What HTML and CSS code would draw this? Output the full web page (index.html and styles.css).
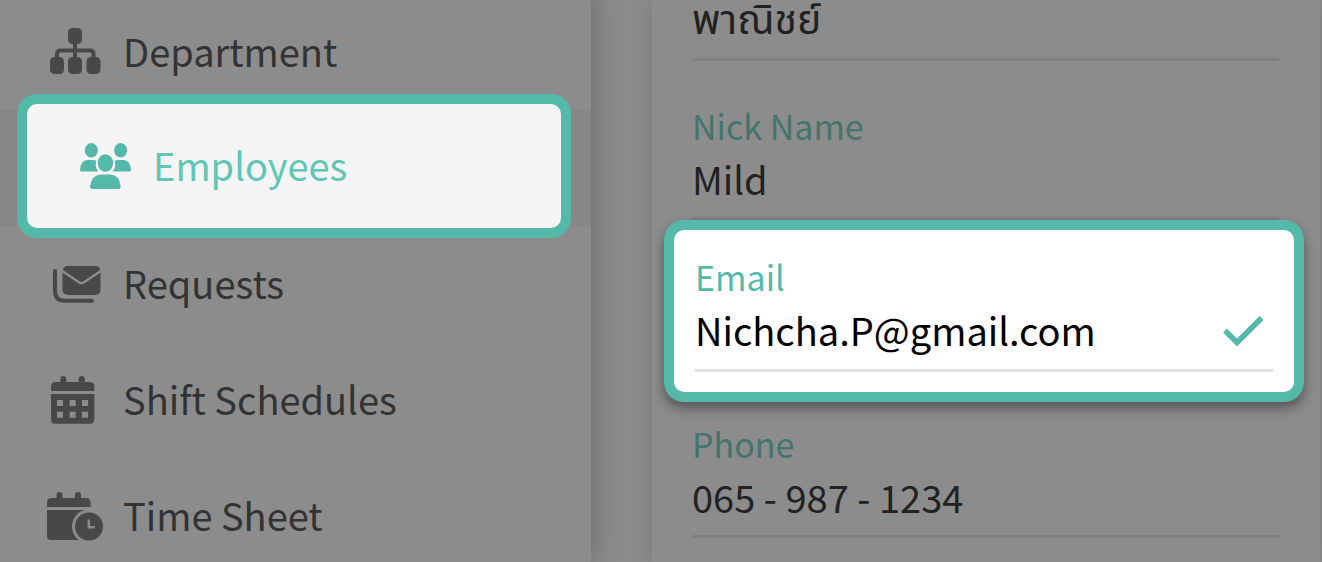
FILE: index.html
```
<!DOCTYPE html>
<html lang="en">
<head>
    <meta charset="utf-8">
    <title>Employees</title>
    <link rel="stylesheet" href="styles.css">
</head>
<body>
    <div class="app">
        <nav class="sidebar">
            <a class="menu-item" href="#department">
                <svg class="menu-icon" viewBox="0 0 56 52" aria-hidden="true">
                    <rect x="21" y="2" width="14" height="16" rx="4.5"/>
                    <rect x="3" y="31" width="14" height="17" rx="4.5"/>
                    <rect x="21" y="31" width="14" height="17" rx="4.5"/>
                    <rect x="39.5" y="31" width="14" height="17" rx="4.5"/>
                    <path class="stroke" d="M28 16V33M10 33V28Q10 24.5 13.5 24.5H43Q46.5 24.5 46.5 28V33"/>
                </svg>
                <span class="menu-label">Department</span>
            </a>
            <div class="active-row">
                <a class="menu-item callout menu-callout" href="#employees">
                    <svg class="menu-icon" viewBox="0 0 56 52" aria-hidden="true">
                        <ellipse cx="14.3" cy="10.3" rx="6.5" ry="7.2"/>
                        <ellipse cx="43.6" cy="10.3" rx="6.5" ry="7.2"/>
                        <path d="M10.5 20H16Q18.5 20 19.3 21Q17.5 27.5 21.5 31.6H4.5Q3 31.6 3 30Q3.5 20.5 10.5 20Z"/>
                        <path d="M46.5 20H41Q38.5 20 37.7 21Q39.5 27.5 35.5 31.6H52.5Q54 31.6 54 30Q53.5 20.5 46.5 20Z"/>
                        <ellipse cx="28.4" cy="23" rx="7.7" ry="8.7"/>
                        <path d="M23.5 34.5H33.5Q42.5 35 43.7 46.5Q43.7 49 41.5 49H15.5Q13 49 13 46.5Q14.5 35 23.5 34.5Z"/>
                    </svg>
                    <span class="menu-label">Employees</span>
                </a>
            </div>
            <a class="menu-item" href="#requests">
                <svg class="menu-icon" viewBox="0 0 56 52" aria-hidden="true">
                    <rect x="15.5" y="8" width="38" height="29" rx="5"/>
                    <path class="gap-line" d="M14.5 12.5L32 24.3Q34.5 26 37 24.3L54.5 12.5"/>
                    <path class="stroke" d="M8 13V33Q8 42.7 17.5 42.7H45"/>
                </svg>
                <span class="menu-label">Requests</span>
            </a>
            <a class="menu-item" href="#shift-schedules">
                <svg class="menu-icon" viewBox="0 0 56 52" aria-hidden="true">
                    <path d="M4 17V12.5Q4 8 8.5 8H13.3V5A3 3 0 0 1 19.3 5V8H31.7V5A3 3 0 0 1 37.7 5V8H42.8Q47.3 8 47.3 12.5V17Z"/>
                    <path fill-rule="evenodd" d="M4 20H47.3V45.5Q47.3 49.7 43 49.7H8.3Q4 49.7 4 45.5ZM10 26V32H16V26ZM22.7 26V32H28.7V26ZM35 26V32H41V26ZM10 37.7V43.7H16V37.7ZM22.7 37.7V43.7H28.7V37.7ZM35 37.7V43.7H41V37.7Z"/>
                </svg>
                <span class="menu-label">Shift Schedules</span>
            </a>
            <a class="menu-item" href="#time-sheet">
                <svg class="menu-icon" viewBox="0 0 56 52" aria-hidden="true">
                    <path d="M0 17V12.5Q0 8 4.5 8H9.5V5A3 3 0 0 1 15.5 5V8H28V5A3 3 0 0 1 34 5V8H39Q43.5 8 43.5 12.5V17Z"/>
                    <path d="M0 20H43.5V50H4.3Q0 50 0 45.7Z"/>
                    <circle class="gap-fill" cx="42" cy="36.5" r="17"/>
                    <circle cx="42" cy="36.5" r="14"/>
                    <path class="gap-line" d="M41.8 29.5V37.3H47.8"/>
                </svg>
                <span class="menu-label">Time Sheet</span>
            </a>
        </nav>

        <main class="content">
            <form class="profile-card">
                <div class="field">
                    <label for="lastName">Last Name</label>
                    <input id="lastName" type="text" lang="th" value="พาณิชย์">
                </div>
                <div class="field">
                    <label for="nickName">Nick Name</label>
                    <input id="nickName" type="text" value="Mild">
                </div>
                <div class="callout email-callout">
                    <div class="field">
                        <label for="email">Email</label>
                        <div class="field-row">
                            <input id="email" type="email" value="Nichcha.P@gmail.com">
                            <svg class="check" viewBox="0 0 40 34" aria-hidden="true">
                                <path d="M2 18.5L14 30.5L38.5 6"/>
                            </svg>
                        </div>
                    </div>
                </div>
                <div class="field">
                    <label for="phone">Phone</label>
                    <input id="phone" type="tel" value="065 - 987 - 1234">
                </div>
            </form>
        </main>
    </div>
</body>
</html>
```
FILE: styles.css
```
* {
    box-sizing: border-box;
}
body {
    font-family: "Noto Sans CJK SC", "Noto Sans Thai", "Noto Sans", sans-serif;
    font-size: 38px;
    line-height: 48px;
    background-color: #8b8b8b;
    margin: 0;
}
.app {
    display: flex;
    height: 100vh;
    overflow: hidden;
}

/* Sidebar */
.sidebar {
    flex: 0 0 591px;
    margin-top: -6px;
    background-color: #8c8c8c;
    box-shadow: 4px 0 24px rgba(0, 0, 0, 0.2);
}
.menu-item {
    display: flex;
    align-items: center;
    gap: 20px;
    height: 116px;
    padding-left: 47px;
    color: #333333;
    text-decoration: none;
}
.menu-icon {
    flex: none;
    width: 56px;
    height: 52px;
    fill: #484848;
}
.menu-icon .stroke {
    fill: none;
    stroke: #484848;
    stroke-width: 4;
    stroke-linecap: round;
}
.menu-icon .gap-line {
    fill: none;
    stroke: #8c8c8c;
    stroke-width: 2.5;
}
.menu-icon .gap-fill {
    fill: #8c8c8c;
}
.menu-label {
    padding-bottom: 2px;
}
.active-row {
    display: flow-root;
    height: 116px;
    background-color: #878787;
}

/* Highlighted boxes */
.callout {
    position: relative;
    border: 10px solid #55b9aa;
    border-radius: 20px;
}
.menu-callout {
    height: 144px;
    margin: -16px 20px 0 17px;
    padding-left: 50px;
    background-color: #f5f5f5;
    color: #60c6b5;
}
.menu-callout .menu-icon {
    fill: #55b9aa;
}
.email-callout {
    margin: 0 -25px -23px -28px;
    padding: 0 21px 20px;
    background-color: #ffffff;
    box-shadow: 0 6px 12px rgba(0, 0, 0, 0.4);
}

/* Profile form */
.content {
    display: flex;
    flex: 1;
    padding: 0 2px 0 61px;
}
.profile-card {
    flex: 1;
    padding: 0 41px 0 40px;
    background-color: #8c8c8c;
    box-shadow: 0 0 20px rgba(0, 0, 0, 0.12);
}
.profile-card > .field:first-child {
    margin-top: -98px;
}
.field {
    padding: 41px 0 11px;
    border-bottom: 3px solid #808080;
}
.field label {
    display: block;
    font-size: 34px;
    color: #44746c;
}
.field input {
    display: block;
    width: 100%;
    height: 56px;
    padding: 0;
    border: none;
    outline: none;
    background: none;
    font: inherit;
    color: #222222;
}
.field input:lang(th) {
    font-size: 41px;
}
.email-callout .field {
    padding: 23px 0 12px;
    border-bottom-color: #e0e0e0;
}
.email-callout label {
    color: #55b9aa;
}
.email-callout input {
    color: #000000;
}
.field-row {
    display: flex;
    align-items: center;
    padding-right: 10px;
}
.check {
    flex: none;
    width: 40px;
    height: 34px;
    fill: none;
    stroke: #55b9aa;
    stroke-width: 5.5;
}
```
